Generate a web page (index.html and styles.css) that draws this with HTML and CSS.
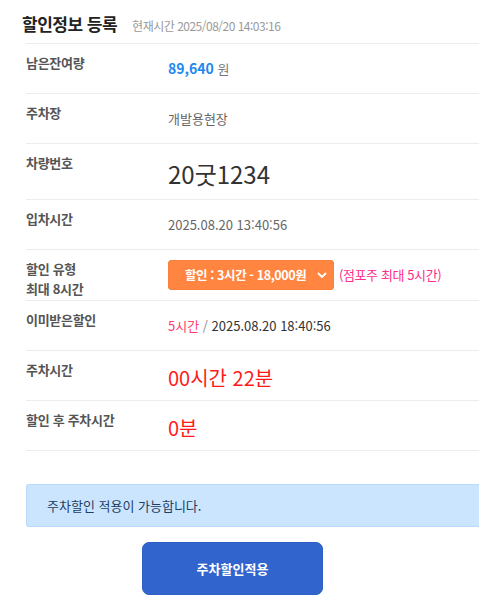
FILE: index.html
```html
<!DOCTYPE html>
<html lang="ko">
<head>
  <meta charset="utf-8">
  <title>할인정보 등록</title>
  <link rel="stylesheet" href="styles.css">
</head>
<body>
  <div class="page">
    <div class="page-head">
      <h2>할인정보 등록</h2>
      <span class="now-time">현재시간 2025/08/20 14:03:16</span>
    </div>

    <table class="info-table">
      <tr>
        <th>남은잔여량</th>
        <td><span class="balance">89,640</span> <span class="unit">원</span></td>
      </tr>
      <tr>
        <th>주차장</th>
        <td class="muted">개발용현장</td>
      </tr>
      <tr class="row-car">
        <th>차량번호</th>
        <td class="car-no">20굿1234</td>
      </tr>
      <tr>
        <th>입차시간</th>
        <td class="muted">2025.08.20 13:40:56</td>
      </tr>
      <tr class="row-select">
        <th>할인 유형<br>최대 8시간</th>
        <td>
          <div class="select-wrap">
            <div class="discount-select">
              <span>할인 : 3시간 - 18,000원</span>
              <svg class="chevron" width="10" height="7" viewBox="0 0 10 7"><path d="M1.5 1.5 L5 5 L8.5 1.5" fill="none" stroke="#fff" stroke-width="1.8" stroke-linecap="round" stroke-linejoin="round"/></svg>
            </div>
            <span class="limit-note">(점포주 최대 5시간)</span>
          </div>
        </td>
      </tr>
      <tr>
        <th>이미받은할인</th>
        <td class="dark"><span class="pink">5시간</span> <span class="slash">/</span> 2025.08.20 18:40:56</td>
      </tr>
      <tr>
        <th>주차시간</th>
        <td class="red-big">00시간 22분</td>
      </tr>
      <tr>
        <th>할인 후 주차시간</th>
        <td class="red-big">0분</td>
      </tr>
    </table>

    <div class="alert-info">주차할인 적용이 가능합니다.</div>

    <div class="btn-area">
      <button class="apply-btn">주차할인적용</button>
    </div>
  </div>
</body>
</html>
```

FILE: styles.css
```css
body {
  margin: 0;
  background: #fff;
  font-family: "Noto Sans CJK KR", "Noto Sans", sans-serif;
  color: #333;
}
.page {
  padding: 11px 0 0 26px;
}
.page-head {
  display: flex;
  align-items: baseline;
  margin-left: -4px;
  height: 32px;
}
.page-head h2 {
  margin: 0;
  font-size: 17px;
  font-weight: bold;
  color: #222;
  letter-spacing: -0.5px;
}
.now-time {
  margin-left: 15px;
  font-size: 12px;
  color: #9a9a9a;
  letter-spacing: -0.5px;
}
.info-table {
  width: 100%;
  border-collapse: collapse;
  border-top: 1px solid #ececec;
}
.info-table tr {
  height: 50px;
  border-bottom: 1px solid #ececec;
}
.info-table tr.row-car {
  height: 56px;
}
.info-table tr.row-select {
  height: 51px;
}
.info-table th {
  width: 142px;
  padding: 9px 0 0;
  text-align: left;
  vertical-align: top;
  font-size: 13px;
  line-height: 20px;
  font-weight: bold;
  color: #555;
  letter-spacing: -0.3px;
}
.info-table td {
  padding: 0;
  vertical-align: middle;
  font-size: 13px;
  line-height: 20px;
}
.balance {
  color: #1e88f0;
  font-weight: bold;
  font-size: 14px;
}
.unit {
  color: #777;
}
.muted {
  color: #666;
}
.info-table td.car-no {
  padding-top: 4px;
  font-size: 24px;
  line-height: 30px;
  color: #333;
}
.dark {
  color: #333;
}
.pink {
  color: #ff3d6e;
}
.slash {
  color: #888;
}
.info-table td.red-big {
  padding-top: 5px;
  font-size: 20px;
  line-height: 28px;
  color: #ff1a1a;
}
.select-wrap {
  display: flex;
  align-items: center;
}
.discount-select {
  display: flex;
  align-items: center;
  justify-content: space-between;
  width: 166px;
  height: 30px;
  box-sizing: border-box;
  padding: 0 6px 0 16px;
  background: #ff8540;
  border: 1px solid #f7813d;
  border-radius: 3px;
  color: #fff;
  font-size: 12.5px;
  font-weight: bold;
  letter-spacing: -0.4px;
}
.limit-note {
  margin-left: 5px;
  color: #ff2d8a;
  font-size: 13px;
  letter-spacing: -0.4px;
}
.alert-info {
  margin-top: 33px;
  height: 43px;
  box-sizing: border-box;
  padding: 0 20px;
  display: flex;
  align-items: center;
  background: #cce5ff;
  border: 1px solid #b8daff;
  border-right: none;
  border-radius: 3px 0 0 3px;
  color: #1d3f63;
  font-size: 13px;
}
.btn-area {
  padding: 15px 0 0 116px;
}
.apply-btn {
  width: 181px;
  height: 53px;
  border: 1px solid #2d5fc4;
  border-radius: 7px;
  background: #3164cc;
  color: #fff;
  font-family: inherit;
  font-size: 13px;
  font-weight: bold;
}
```
